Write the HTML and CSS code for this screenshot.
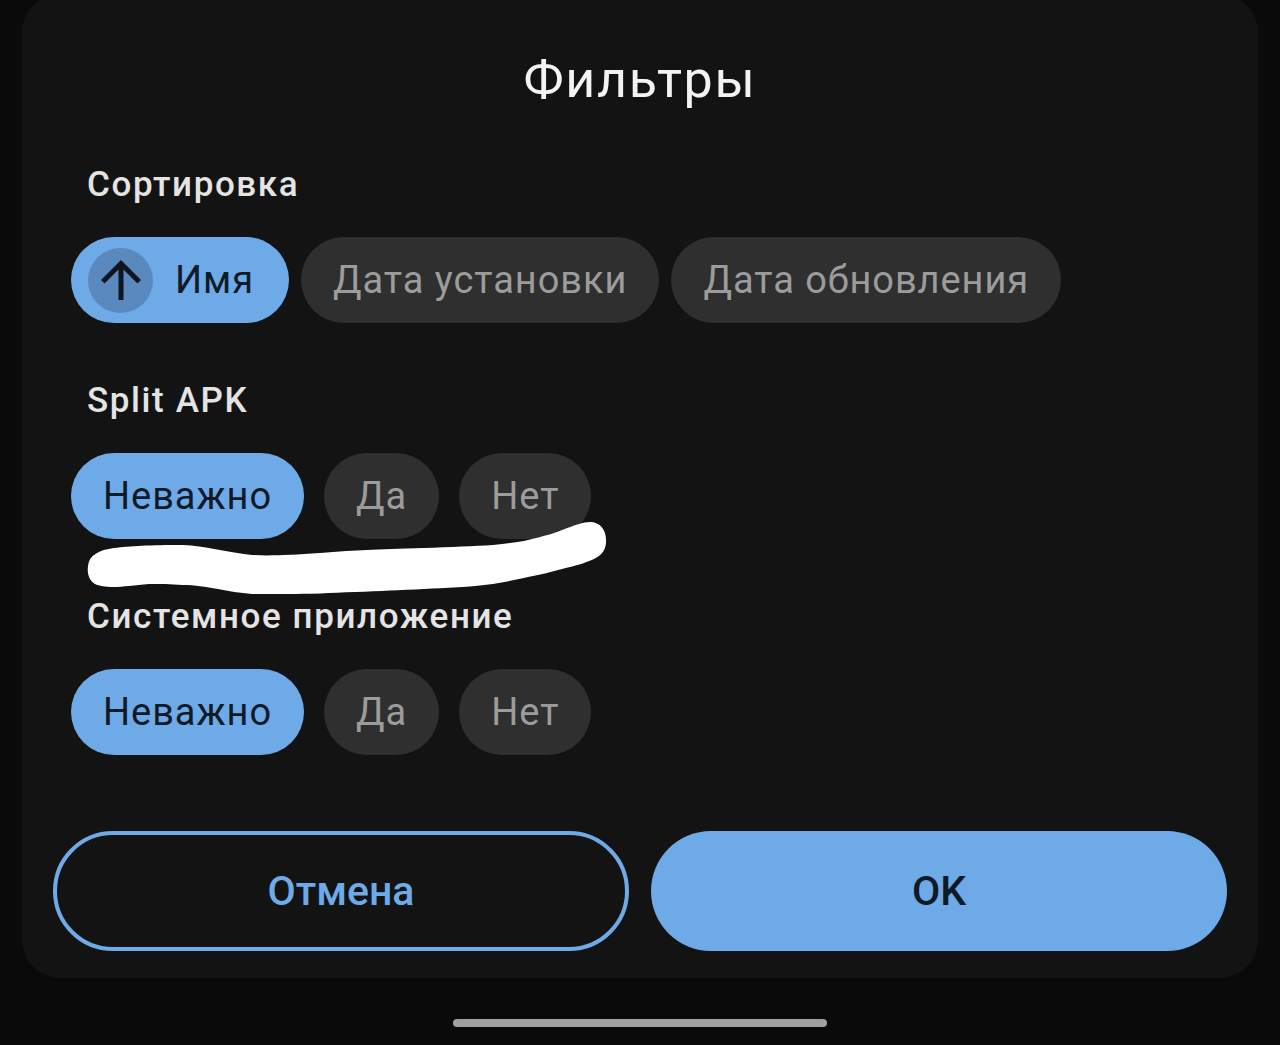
FILE: index.html
```html
<!DOCTYPE html>
<html lang="ru">
<head>
<meta charset="utf-8">
<title>Фильтры</title>
<link rel="stylesheet" href="styles.css">
</head>
<body>
<div class="screen">
  <div class="dialog">
    <h1 class="title">Фильтры</h1>

    <section class="group">
      <h2 class="label">Сортировка</h2>
      <div class="chips chips-tight">
        <div class="chip chip-on chip-icon">
          <span class="chip-badge">
            <svg viewBox="0 0 24 24" width="60" height="60"><path d="M4 12l1.41 1.41L11 7.83V20h2V7.83l5.58 5.59L20 12l-8-8-8 8z" fill="#0f1620"/></svg>
          </span>
          <span>Имя</span>
        </div>
        <div class="chip">Дата установки</div>
        <div class="chip">Дата обновления</div>
      </div>
    </section>

    <section class="group">
      <h2 class="label">Split APK</h2>
      <div class="chips">
        <div class="chip chip-on">Неважно</div>
        <div class="chip">Да</div>
        <div class="chip">Нет</div>
      </div>
    </section>

    <section class="group">
      <h2 class="label">Системное приложение</h2>
      <div class="chips">
        <div class="chip chip-on">Неважно</div>
        <div class="chip">Да</div>
        <div class="chip">Нет</div>
      </div>
    </section>

    <div class="actions">
      <button class="btn btn-outline">Отмена</button>
      <button class="btn btn-filled">OK</button>
    </div>

    <svg class="scribble" viewBox="85 518 525 82" width="525" height="82">
      <path d="M88 566 C89 555 99 550 114 548 C130 546 150 545 183 545 C205 546 225 552 252 555 C270 556 290 555 320 553 C355 550 390 549 424 548 C450 547 475 546 493 545 C510 543 520 542 528 540 C545 536 555 533 562 530 C575 525 583 522 590 522 C601 522 607 531 606 543 C605 552 600 556 594 559 C585 563 575 566 562 569 C550 572 540 575 528 577 C515 580 505 582 493 584 C470 587 445 588 424 589 C400 590 380 591 355 592 C330 593 310 594 287 594 C270 594 258 594 252 594 C240 593 228 591 218 589 C205 587 195 585 183 585 C170 584 160 584 149 584 C135 585 122 587 114 587 C105 587 99 586 95 584 C89 580 87 574 88 566 Z" fill="#ffffff"/>
    </svg>
  </div>
  <div class="home-bar"></div>
</div>
</body>
</html>
```

FILE: styles.css
```css
html, body {
  margin: 0;
  padding: 0;
  background: #0a0a0a;
}

body {
  width: 1280px;
  height: 1045px;
  overflow: hidden;
  font-family: Roboto, "Noto Sans", "Liberation Sans", sans-serif;
}

.screen {
  display: flex;
  flex-direction: column;
  align-items: center;
}

.dialog {
  position: relative;
  box-sizing: border-box;
  width: 1236px;
  margin-top: -6px;
  padding: 56px 31px 27px;
  background: #131313;
  border-radius: 38px;
  display: flex;
  flex-direction: column;
}

.title {
  margin: 0;
  height: 60px;
  line-height: 60px;
  font-size: 52px;
  font-weight: 400;
  letter-spacing: 1.7px;
  color: #f3f3f3;
  text-align: center;
}

.group {
  display: flex;
  flex-direction: column;
  gap: 32px;
  margin-top: 55px;
}

.group + .group {
  margin-top: 58px;
}

.label {
  margin: 0 0 0 34px;
  height: 40px;
  line-height: 40px;
  font-size: 35px;
  font-weight: 500;
  letter-spacing: 1.6px;
  color: #e4e4e4;
}

.chips {
  display: flex;
  gap: 20px;
  margin-left: 18px;
}

.chips-tight {
  gap: 12px;
}

.chip {
  box-sizing: border-box;
  height: 86px;
  padding: 0 32px;
  border-radius: 43px;
  background: #2f2f2f;
  color: #9c9c9c;
  font-size: 38px;
  letter-spacing: 0.95px;
  line-height: 86px;
  display: flex;
  align-items: center;
  white-space: nowrap;
}

.chip-on {
  background: #6eaae8;
  color: #0f1a27;
}

.chip-icon {
  padding: 0 35px 0 17px;
  gap: 22px;
}

.chip-badge {
  width: 65px;
  height: 65px;
  border-radius: 50%;
  background: #5a89bf;
  display: flex;
  align-items: center;
  justify-content: center;
}

.actions {
  display: flex;
  gap: 22px;
  margin-top: 76px;
}

.btn {
  flex: none;
  box-sizing: border-box;
  width: 576px;
  height: 120px;
  padding: 0;
  border-radius: 60px;
  font-family: Roboto, "Noto Sans", "Liberation Sans", sans-serif;
  font-size: 41px;
  font-weight: 500;
  cursor: pointer;
}

.btn-outline {
  background: #131313;
  border: 4px solid #6eaae8;
  color: #6eaae8;
}

.btn-filled {
  background: #6eaae8;
  border: none;
  color: #0f1a27;
}

.scribble {
  position: absolute;
  left: 63px;
  top: 524px;
}

.home-bar {
  width: 374px;
  height: 8px;
  margin-top: 41px;
  border-radius: 4px;
  background: #a0a0a0;
}
```
